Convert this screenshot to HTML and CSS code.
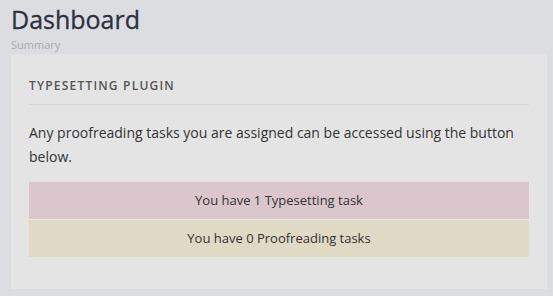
FILE: index.html
```html
<!DOCTYPE html>
<html lang="en">
<head>
    <meta charset="UTF-8">
    <meta name="viewport" content="width=device-width, initial-scale=1.0">
    <title>Dashboard</title>
    <link rel="stylesheet" href="styles.css">
</head>
<body>

<header class="page-header">
    <h1>Dashboard</h1>
    <p class="subtitle">Summary</p>
</header>

<!-- Typesetting plugin panel -->
<div class="panel">
    <h2 class="panel-title">Typesetting Plugin</h2>
    <p class="panel-text">Any proofreading tasks you are assigned can be accessed using the button below.</p>
    <div class="task-list">
        <a class="task task-typesetting" href="#">You have 1 Typesetting task</a>
        <a class="task task-proofreading" href="#">You have 0 Proofreading tasks</a>
    </div>
</div>

</body>
</html>
```

FILE: styles.css
```css
body {
    font-family: 'Open Sans', sans-serif;
    background-color: #dcdde1;
    color: #333;
    margin: 0;
    padding: 0 6px 0 11px;
}
.page-header h1 {
    font-size: 25px;
    font-weight: 400;
    color: #2b3140;
    margin: 0;
    padding-top: 2px;
    line-height: 34px;
    -webkit-text-stroke: 0.3px #2b3140;
}
.page-header .subtitle {
    font-size: 11px;
    color: #aaa;
    margin: 0;
    line-height: 18px;
}
.panel {
    background: #e4e4e4;
    padding: 18px 18px 32px;
}
.panel-title {
    font-size: 12px;
    font-weight: 600;
    letter-spacing: 1.2px;
    text-transform: uppercase;
    color: #555;
    margin: 0;
    padding: 5px 0 10px;
    border-bottom: 1px solid #d6d6d6;
}
.panel-text {
    font-size: 14px;
    line-height: 24px;
    margin: 16px 0 13px;
}
.task-list {
    display: flex;
    flex-direction: column;
}
.task {
    display: block;
    text-align: center;
    font-size: 13px;
    color: #333;
    text-decoration: none;
    line-height: 37px;
}
.task-typesetting {
    background: #dcc6cd;
    border-bottom: 1px solid #ececec;
}
.task-proofreading {
    background: #e0d9c6;
}
```
